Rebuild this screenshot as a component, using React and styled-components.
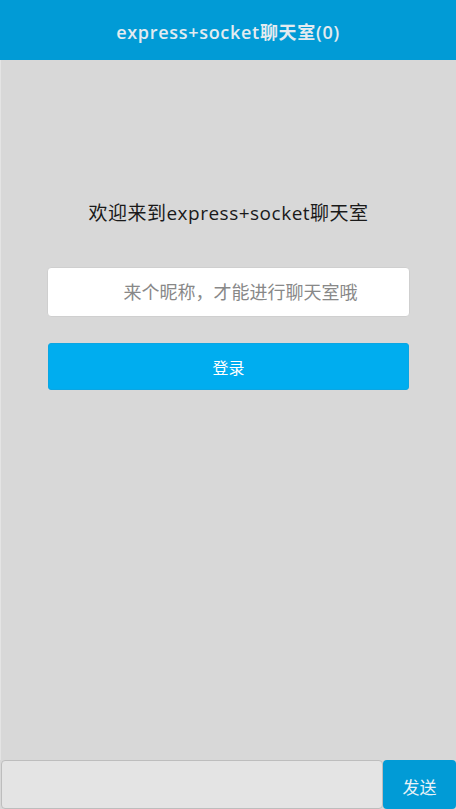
import React from "react";
import styled, { createGlobalStyle } from "styled-components";

const Global = createGlobalStyle`
  html, body { margin: 0; padding: 0; height: 100%; }
  body { font-family: "Open Sans", "Noto Sans CJK SC", sans-serif; background: #d8d8d8; }
  #root { height: 100%; }
  * { box-sizing: border-box; }
`;

const Page = styled.div`
  height: 100vh;
  display: flex;
  flex-direction: column;
`;

const Header = styled.header`
  height: 60px;
  flex: 0 0 60px;
  background: #019bd6;
  color: #e3ebf0;
  display: flex;
  align-items: center;
  justify-content: center;
  font-size: 18px;
  font-weight: 600;
  letter-spacing: 0.7px;
  padding-top: 2px;
`;

const Main = styled.main`
  flex: 1;
  background: #d8d8d8;
  border-left: 1px solid #e4e4e4;
  display: flex;
  flex-direction: column;
  align-items: center;
  padding: 139px 46px 0 46px;
`;

const Welcome = styled.h2`
  margin: 0;
  font-size: 19px;
  font-weight: 400;
  letter-spacing: 0.5px;
  color: #1a1a1a;
  line-height: 28px;
`;

const NameInput = styled.input`
  margin-top: 40px;
  width: 100%;
  height: 50px;
  border: 1px solid #cfcfcf;
  border-radius: 4px;
  background: #fff;
  text-align: center;
  padding-left: 26px;
  font-family: inherit;
  font-size: 18px;
  color: #333;
  outline: none;
  &::placeholder { color: #888; }
`;

const LoginButton = styled.button`
  margin-top: 26px;
  width: calc(100% - 2px);
  height: 47px;
  border: 1px solid #0aa6e3;
  border-radius: 3px;
  background: #00adef;
  color: #fff;
  font-family: inherit;
  font-size: 16px;
`;

const Footer = styled.footer`
  flex: 0 0 49px;
  display: flex;
  background: #d8d8d8;
`;

const MsgInput = styled.input`
  flex: 1;
  height: 49px;
  margin-left: 1px;
  background: #e4e4e4;
  border: 1px solid #bdbdbd;
  border-radius: 4px;
  outline: none;
`;

const SendButton = styled.button`
  width: 73px;
  height: 49px;
  border: none;
  border-radius: 4px;
  background: #019bd6;
  color: #e8f2f8;
  font-family: inherit;
  font-size: 17px;
  padding-top: 4px;
`;

export default function App() {
  return (
    <>
      <Global />
      <Page>
        <Header>express+socket聊天室(0)</Header>
        <Main>
          <Welcome>欢迎来到express+socket聊天室</Welcome>
          <NameInput placeholder="来个昵称，才能进行聊天室哦" />
          <LoginButton>登录</LoginButton>
        </Main>
        <Footer>
          <MsgInput />
          <SendButton>发送</SendButton>
        </Footer>
      </Page>
    </>
  );
}
